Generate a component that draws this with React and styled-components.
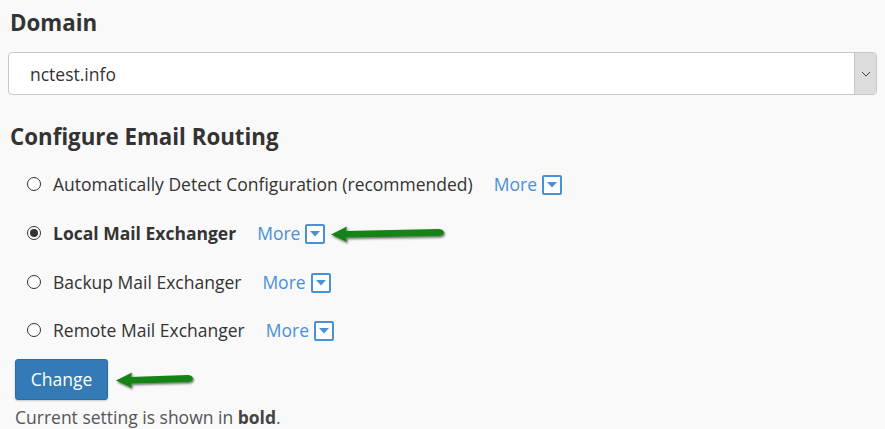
import React from "react";
import styled, { createGlobalStyle } from "styled-components";

const Global = createGlobalStyle`
  body {
    margin: 0;
    background: #f9f9f9;
    font-family: "Open Sans", "Liberation Sans", sans-serif;
    color: #333;
  }
`;

const options = [
  { label: "Automatically Detect Configuration (recommended)" },
  { label: "Local Mail Exchanger", current: true, arrow: true },
  { label: "Backup Mail Exchanger" },
  { label: "Remote Mail Exchanger" },
];

const Arrow = ({ width = 116 }) => (
  <ArrowSvg width={width} height="18" viewBox={`0 0 ${width} 18`}>
    <defs>
      <filter id="sh" x="-10%" y="-50%" width="130%" height="200%">
        <feDropShadow dx="1" dy="1.5" stdDeviation="1" floodColor="#000" floodOpacity="0.6" />
      </filter>
    </defs>
    <path
      d={`M1 9.5 L17 1.5 L16 6 L${width - 7} 4 Q${width - 2} 4.5 ${width - 2} 8 Q${width - 3} 11 ${width - 8} 11 L16 12.5 L17 17 Z`}
      fill="#138313"
      filter="url(#sh)"
    />
  </ArrowSvg>
);

const App = () => {
  return (
    <Page>
      <Global />
      <Heading>Domain</Heading>
      <Select>
        <SelectValue>nctest.info</SelectValue>
        <SelectButton>
          <svg width="10" height="6" viewBox="0 0 10 6">
            <path d="M1 1 L5 5 L9 1" fill="none" stroke="#444" strokeWidth="1" />
          </svg>
        </SelectButton>
      </Select>
      <Heading $top={26} $bottom={7}>Configure Email Routing</Heading>
      <Options>
        {options.map((o) => (
          <Option key={o.label}>
            <Radio $checked={o.current} />
            <Label $bold={o.current}>{o.label}</Label>
            <More>
              More
              <MoreBox>
                <svg width="10" height="6" viewBox="0 0 10 6">
                  <path d="M0 0 L10 0 L5 5.5 Z" fill="#4a90d6" />
                </svg>
              </MoreBox>
            </More>
            {o.arrow && <Arrow width={116} />}
          </Option>
        ))}
      </Options>
      <ButtonRow>
        <Button>Change</Button>
        <Arrow width={80} />
      </ButtonRow>
      <Note>
        Current setting is shown in <b>bold</b>.
      </Note>
    </Page>
  );
};

const Page = styled.div`
  padding: 7px 8px 0 8px;
  width: 869px;
`;

const Heading = styled.h3`
  margin: ${(p) => p.$top || 0}px 0 ${(p) => (p.$bottom ?? 13)}px 2px;
  font-size: 22.3px;
  font-weight: 700;
  line-height: 32px;
  color: #333;
`;

const Select = styled.div`
  display: flex;
  height: 43px;
  border: 1px solid #c8c8c8;
  border-radius: 4px;
  background: #fff;
  box-sizing: border-box;
  overflow: hidden;
`;

const SelectValue = styled.div`
  flex: 1;
  display: flex;
  align-items: center;
  padding-left: 21px;
  font-size: 17.5px;
  color: #333;
`;

const SelectButton = styled.div`
  width: 21px;
  border-left: 1px solid #c8c8c8;
  background: #dcdcdc;
  display: flex;
  align-items: center;
  justify-content: center;
`;

const Options = styled.div`
  display: flex;
  flex-direction: column;
`;

const Option = styled.div`
  display: flex;
  align-items: center;
  height: 48.7px;
  padding-left: 19px;
`;

const Radio = styled.span`
  width: 12px;
  height: 12px;
  border: 1.5px solid #333;
  border-radius: 50%;
  background: #fff;
  position: relative;
  margin-right: 12px;
  flex-shrink: 0;
  &::after {
    content: "";
    display: ${(p) => (p.$checked ? "block" : "none")};
    position: absolute;
    inset: 2px;
    border-radius: 50%;
    background: #333;
  }
`;

const Label = styled.span`
  font-size: 17.5px;
  font-weight: ${(p) => (p.$bold ? 700 : 400)};
  color: #333;
`;

const More = styled.span`
  display: inline-flex;
  align-items: center;
  margin-left: 21px;
  font-size: 17.5px;
  color: #4a90d6;
  gap: 5px;
`;

const MoreBox = styled.span`
  width: 16px;
  height: 16px;
  border: 2px solid #4a90d6;
  border-radius: 2px;
  display: inline-flex;
  align-items: center;
  justify-content: center;
  background: #fff;
  margin-top: 2px;
`;

const ArrowSvg = styled.svg`
  margin-left: 5px;
  margin-top: 1px;
  overflow: visible;
`;

const ButtonRow = styled.div`
  display: flex;
  align-items: center;
  margin-top: 4px;
  padding-left: 7px;
`;

const Button = styled.button`
  width: 93px;
  height: 41px;
  border: 1px solid #2e6da4;
  border-radius: 3px;
  background: #337ab7;
  color: #fff;
  font-family: inherit;
  font-size: 17.5px;
  box-shadow: 0 1px 2px rgba(0, 0, 0, 0.2);
  margin-right: 2px;
`;

const Note = styled.div`
  margin-top: 5px;
  padding-left: 7px;
  font-size: 17.5px;
  color: #555;
  b {
    color: #444;
  }
`;

export default App;
